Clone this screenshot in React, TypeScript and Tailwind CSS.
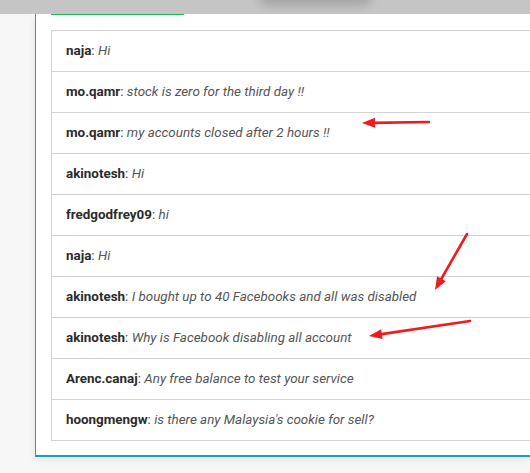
const messages = [
  { user: "naja", text: "Hi" },
  { user: "mo.qamr", text: "stock is zero for the third day !!" },
  { user: "mo.qamr", text: "my accounts closed after 2 hours !!" },
  { user: "akinotesh", text: "Hi" },
  { user: "fredgodfrey09", text: "hi" },
  { user: "naja", text: "Hi" },
  { user: "akinotesh", text: "I bought up to 40 Facebooks and all was disabled" },
  { user: "akinotesh", text: "Why is Facebook disabling all account" },
  { user: "Arenc.canaj", text: "Any free balance to test your service" },
  { user: "hoongmengw", text: "is there any Malaysia's cookie for sell?" },
];

type Pt = [number, number];

// red pointer arrows drawn over the chat list
const arrows: [Pt, Pt][] = [
  [[429, 122], [362, 123]],
  [[467, 234], [435, 290]],
  [[470, 321], [369, 336]],
];

function Arrow({ from, to }: { from: Pt; to: Pt }) {
  const dx = to[0] - from[0];
  const dy = to[1] - from[1];
  const len = Math.hypot(dx, dy);
  const ux = dx / len;
  const uy = dy / len;
  const head = 13;
  const half = 5;
  const bx = to[0] - ux * head;
  const by = to[1] - uy * head;
  const p1 = `${bx - uy * half},${by + ux * half}`;
  const p2 = `${bx + uy * half},${by - ux * half}`;
  return (
    <g>
      <line x1={from[0]} y1={from[1]} x2={bx + ux * 2} y2={by + uy * 2} stroke="#ee1c1c" strokeWidth={2.6} strokeLinecap="round" />
      <polygon points={`${to[0]},${to[1]} ${p1} ${p2}`} fill="#ee1c1c" />
    </g>
  );
}

export default function App() {
  return (
    <div className="relative w-[530px] h-[473px] overflow-hidden bg-[#f7f7f7] font-['Roboto',sans-serif]">
      <div className="relative z-10 h-[14px] bg-[#c5c5c5] overflow-hidden">
        <div className="absolute left-[262px] top-[-12px] w-[106px] h-[12px] rounded-md shadow-[0_2px_10px_4px_rgba(0,0,0,0.16)]" />
      </div>

      <div className="pl-[35px]">
        <div className="bg-white border-l border-b-2 border-[#19a3b3] pl-[15px] pb-[14px] shadow-[0_3px_8px_rgba(0,0,0,0.08)]">
          <div className="w-[133px] h-[1px] bg-[#22b35e] shadow-[0_4px_8px_rgba(0,0,0,0.15)]" />
          <ul className="mt-[15px] border-l border-t border-[#d2d2d2] w-[600px]">
            {messages.map((m, i) => (
              <li
                key={i}
                className="h-[41px] flex items-center pl-[14px] text-[13.4px] border-b border-[#d2d2d2]"
              >
                <span className="font-bold text-[#2b2b2b]">{m.user}</span>
                <span className="text-[#444]">:&nbsp;</span>
                <span className="italic text-[#555]">{m.text}</span>
              </li>
            ))}
          </ul>
        </div>
      </div>

      <svg className="absolute inset-0 pointer-events-none" width={530} height={473}>
        {arrows.map(([a, b], i) => (
          <Arrow key={i} from={a} to={b} />
        ))}
      </svg>
    </div>
  );
}
